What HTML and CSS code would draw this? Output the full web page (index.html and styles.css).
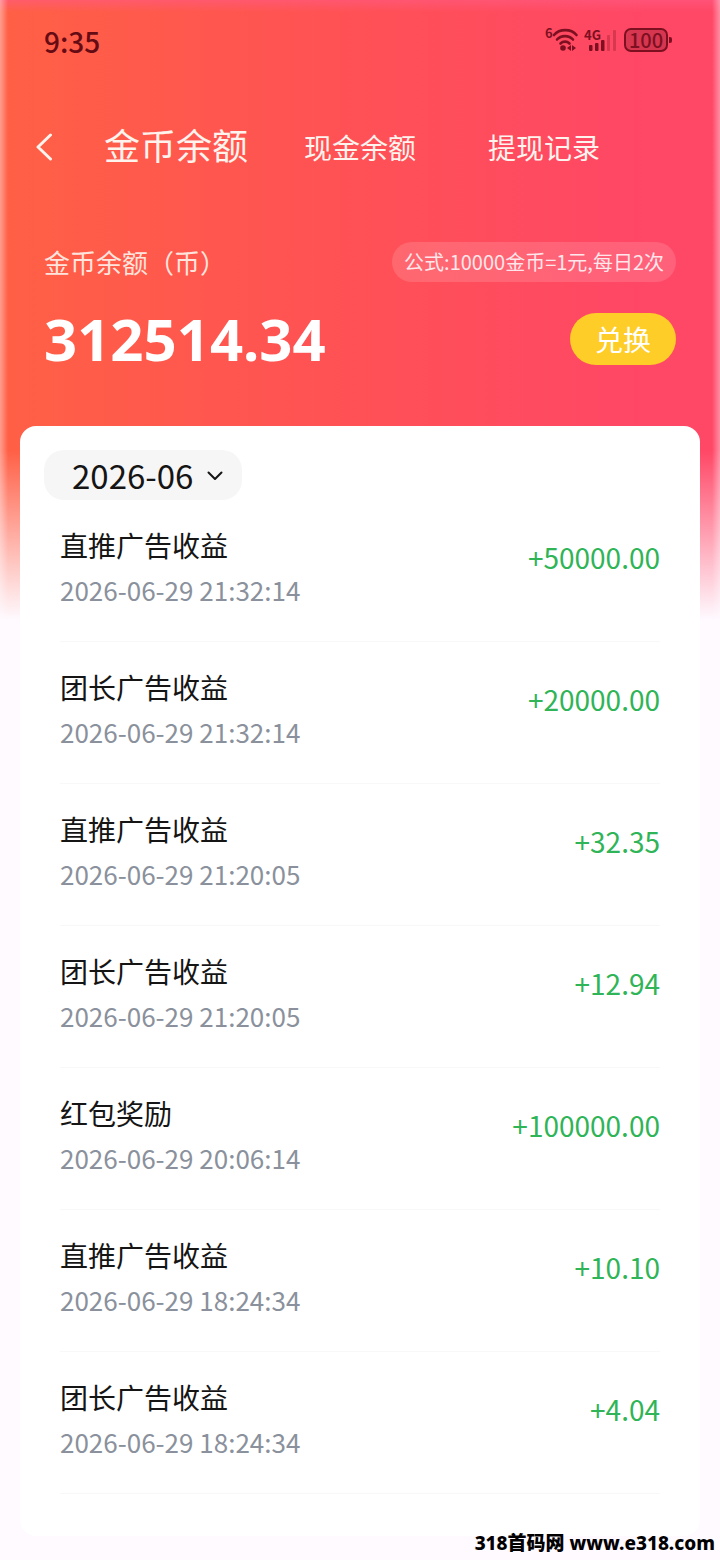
FILE: index.html
```html
<!DOCTYPE html>
<html lang="zh-CN">
<head>
    <meta charset="UTF-8">
    <meta name="viewport" content="width=device-width, initial-scale=1.0">
    <title>金币余额</title>
    <link rel="stylesheet" href="styles.css">
</head>
<body>
    <div class="page">
        <div class="status-bar">
            <span class="time">9:35</span>
            <div class="status-icons">
                <svg class="icon-wifi" width="34" height="28" viewBox="0 0 34 28">
                    <text x="1" y="12" class="icon-text">6</text>
                    <g fill="none" stroke="currentColor" stroke-width="2.6" stroke-linecap="round">
                        <path d="M10 9C15.500 2.500 27 2.500 32.500 9"/>
                        <path d="M13 13.500C17 9 25 9 29 13.500"/>
                        <path d="M16.500 17.500C19 15 23 15 25.500 17.500"/>
                    </g>
                    <circle cx="19" cy="22" r="2.800" fill="currentColor"/>
                    <path d="M23 22l4-3v6zM32 22l-4-3v6z" fill="currentColor"/>
                </svg>
                <svg class="icon-signal" width="34" height="28" viewBox="0 0 34 28">
                    <text x="0" y="14" class="icon-text">4G</text>
                    <g fill="currentColor">
                        <rect x="5" y="19" width="3.5" height="6" rx="1"/>
                        <rect x="11" y="17" width="3.5" height="8" rx="1"/>
                        <rect x="17" y="14" width="3.5" height="11" rx="1"/>
                        <rect x="23" y="9" width="3" height="16" rx="1" opacity="0.3"/>
                        <rect x="29" y="4" width="3" height="21" rx="1" opacity="0.3"/>
                    </g>
                </svg>
                <div class="battery">100</div>
            </div>
        </div>

        <nav class="nav">
            <button class="back" aria-label="返回">
                <svg width="18" height="28" viewBox="0 0 18 28" fill="none">
                    <path d="M15.500 2L3 14L15.500 26" stroke="currentColor" stroke-width="3" stroke-linecap="round" stroke-linejoin="round"/>
                </svg>
            </button>
            <button class="tab active">金币余额</button>
            <button class="tab">现金余额</button>
            <button class="tab">提现记录</button>
        </nav>

        <section class="balance">
            <div class="balance-row">
                <span class="balance-label">金币余额（币）</span>
                <span class="formula">公式:10000金币=1元,每日2次</span>
            </div>
            <div class="balance-row">
                <strong class="balance-num">312514.34</strong>
                <button class="exchange">兑换</button>
            </div>
        </section>

        <main class="card">
            <div class="month">
                <select aria-label="月份">
                    <option>2026-06</option>
                </select>
                <svg width="16" height="10" viewBox="0 0 16 10" fill="none">
                    <path d="M1.500 1.500L8 8L14.500 1.500" stroke="currentColor" stroke-width="2" stroke-linecap="round" stroke-linejoin="round"/>
                </svg>
            </div>
            <ul class="list">
                <li class="item">
                    <div>
                        <p class="item-title">直推广告收益</p>
                        <p class="item-time">2026-06-29 21:32:14</p>
                    </div>
                    <span class="item-num">+50000.00</span>
                </li>
                <li class="item">
                    <div>
                        <p class="item-title">团长广告收益</p>
                        <p class="item-time">2026-06-29 21:32:14</p>
                    </div>
                    <span class="item-num">+20000.00</span>
                </li>
                <li class="item">
                    <div>
                        <p class="item-title">直推广告收益</p>
                        <p class="item-time">2026-06-29 21:20:05</p>
                    </div>
                    <span class="item-num">+32.35</span>
                </li>
                <li class="item">
                    <div>
                        <p class="item-title">团长广告收益</p>
                        <p class="item-time">2026-06-29 21:20:05</p>
                    </div>
                    <span class="item-num">+12.94</span>
                </li>
                <li class="item">
                    <div>
                        <p class="item-title">红包奖励</p>
                        <p class="item-time">2026-06-29 20:06:14</p>
                    </div>
                    <span class="item-num">+100000.00</span>
                </li>
                <li class="item">
                    <div>
                        <p class="item-title">直推广告收益</p>
                        <p class="item-time">2026-06-29 18:24:34</p>
                    </div>
                    <span class="item-num">+10.10</span>
                </li>
                <li class="item">
                    <div>
                        <p class="item-title">团长广告收益</p>
                        <p class="item-time">2026-06-29 18:24:34</p>
                    </div>
                    <span class="item-num">+4.04</span>
                </li>
            </ul>
        </main>

        <footer class="footer">318首码网 www.e318.com</footer>
    </div>
</body>
</html>
```

FILE: styles.css
```css
:root {
    --bg-color: #fefaff;
    --card-bg: #ffffff;
    --text-color: #151515;
    --text-secondary: #8a919c;
    --income-color: #2fb457;
    --status-color: #7c1020;
    --exchange-color: #fecd27;
}

* {
    margin: 0;
    padding: 0;
    box-sizing: border-box;
}

body {
    font-family: "Noto Sans CJK SC", sans-serif;
    background-color: var(--bg-color);
    color: var(--text-color);
}

button,
select {
    font-family: inherit;
    color: inherit;
    background: none;
    border: none;
    cursor: pointer;
}

.page {
    min-height: 100vh;
    background:
        linear-gradient(to bottom, rgba(254, 250, 255, 0) 450px, var(--bg-color) 620px),
        linear-gradient(to right, rgba(255, 250, 255, 0.4), rgba(255, 250, 255, 0) 8px),
        linear-gradient(to left, rgba(255, 250, 255, 0.4), rgba(255, 250, 255, 0) 8px),
        linear-gradient(to bottom, rgba(255, 90, 130, 0.6), rgba(255, 90, 130, 0) 12px),
        linear-gradient(to right, #ff6045, #ff5254 45%, #ff4766 90%);
}

/* 状态栏 */
.status-bar {
    display: flex;
    justify-content: space-between;
    align-items: center;
    height: 82px;
    padding: 0 52px 0 44px;
    color: var(--status-color);
}

.time {
    font-size: 28px;
    font-weight: 500;
    line-height: 40px;
    color: #650b14;
}

.status-icons {
    display: flex;
    align-items: center;
    gap: 6px;
    padding-bottom: 2px;
}

.icon-text {
    font-size: 13px;
    font-weight: 700;
    fill: currentColor;
}

.icon-wifi {
    overflow: visible;
}

.battery {
    position: relative;
    width: 44px;
    height: 24px;
    border: 2px solid currentColor;
    border-radius: 7px;
    background: rgba(124, 16, 32, 0.3);
    font-size: 20px;
    font-weight: 500;
    line-height: 20px;
    text-align: center;
}

.battery::after {
    content: "";
    position: absolute;
    top: 7px;
    right: -6px;
    width: 3px;
    height: 6px;
    border-radius: 0 2px 2px 0;
    background: currentColor;
}

/* 导航 */
.nav {
    display: grid;
    grid-template-columns: 84px 1fr 1fr 1fr 84px;
    align-items: center;
    height: 130px;
    color: #fff3ee;
}

.back {
    padding-left: 35px;
    text-align: left;
    line-height: 0;
}

.tab {
    font-size: 28px;
    line-height: 52px;
    white-space: nowrap;
}

.tab.active {
    padding-bottom: 6px;
    font-size: 36px;
}

/* 余额 */
.balance {
    display: flex;
    flex-direction: column;
    gap: 31px;
    padding: 30px 44px 61px;
    color: #ffffff;
}

.balance-row {
    display: flex;
    justify-content: space-between;
    align-items: center;
}

.balance-label {
    font-size: 26px;
    line-height: 40px;
    color: #ffe4de;
}

.formula {
    padding: 0 12px;
    border-radius: 20px;
    background: rgba(255, 255, 255, 0.14);
    font-size: 20px;
    line-height: 40px;
    color: #ffe6ea;
}

.balance-num {
    font-family: "Noto Sans", sans-serif;
    font-size: 58px;
    line-height: 52px;
}

.exchange {
    width: 106px;
    height: 52px;
    border-radius: 26px;
    background: var(--exchange-color);
    font-size: 28px;
    line-height: 52px;
}

/* 明细 */
.card {
    margin: 0 20px;
    padding: 24px 24px 42px;
    border-radius: 16px;
    background: var(--card-bg);
}

.month {
    position: relative;
    width: 198px;
    height: 50px;
}

.month select {
    appearance: none;
    width: 100%;
    height: 100%;
    padding-left: 28px;
    border-radius: 20px;
    background: #f6f6f6;
    font-size: 33px;
}

.month svg {
    position: absolute;
    top: 21px;
    right: 19px;
    pointer-events: none;
}

.list {
    padding: 0 16px;
    list-style: none;
}

.item {
    display: flex;
    justify-content: space-between;
    align-items: flex-start;
    padding: 25px 0 33px;
    border-bottom: 1px solid #f8f8f8;
}

.item-title {
    font-size: 28px;
    line-height: 40px;
}

.item-time {
    margin-top: 7px;
    font-size: 26px;
    line-height: 36px;
    color: var(--text-secondary);
}

.item-num {
    margin-top: 12px;
    font-size: 28px;
    line-height: 40px;
    color: var(--income-color);
}

.footer {
    padding: 0 5px 8px;
    font-family: "Noto Sans", "Noto Sans CJK SC", sans-serif;
    font-size: 19px;
    font-weight: 800;
    line-height: 15px;
    text-align: right;
    color: #000000;
}
```
